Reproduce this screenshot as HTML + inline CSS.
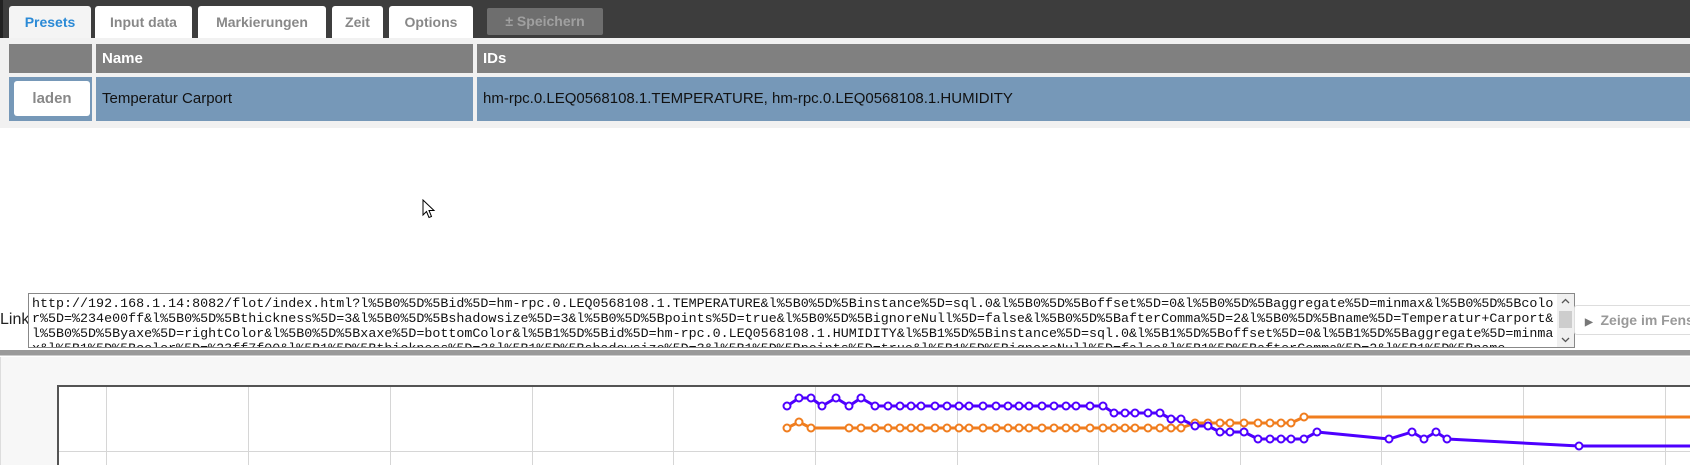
<!DOCTYPE html>
<html><head><meta charset="utf-8"><style>
*{margin:0;padding:0;box-sizing:border-box}
body{width:1690px;height:465px;overflow:hidden;background:#fff;font-family:"Liberation Sans",Arial,sans-serif;position:relative}
.a{position:absolute}
.top{left:0;top:0;width:1690px;height:38px;background:#3d3d3d;border-left:3px solid #222}
.tab{top:6px;height:35px;background:#fff;color:#888;font-weight:bold;font-size:14px;text-align:center;line-height:33px;border-radius:3px 3px 0 0}
.panel{left:0;top:38px;width:1690px;height:90px;background:#f1f1f1}
.hd{top:44px;height:29px;background:#808080;color:#fff;font-weight:bold;font-size:15px;line-height:29px;padding-left:6px}
.rw{top:77px;height:44px;background:#7698b8;color:#111;font-size:15px;line-height:44px;padding-left:6px}
pre{font-family:"Liberation Mono","Courier New",monospace;font-size:13.35px;line-height:15px;color:#111}
</style></head><body>
<div class="a top"></div>
<div class="a tab" style="left:9px;width:82px;background:#f4f4f4;color:#2b8ad6">Presets</div>
<div class="a tab" style="left:95px;width:97px">Input data</div>
<div class="a tab" style="left:198px;width:128px">Markierungen</div>
<div class="a tab" style="left:332px;width:51px">Zeit</div>
<div class="a tab" style="left:389px;width:84px">Options</div>
<div class="a" style="left:487px;top:8px;width:116px;height:27px;background:#6e6e6e;border-radius:2px;color:#a0a0a0;font-weight:bold;font-size:14px;line-height:27px;text-align:center">± Speichern</div>
<div class="a panel"></div>
<div class="a hd" style="left:9px;width:83px"></div>
<div class="a hd" style="left:96px;width:377px">Name</div>
<div class="a hd" style="left:477px;width:1213px">IDs</div>
<div class="a rw" style="left:9px;width:83px"></div>
<div class="a" style="left:14px;top:81px;width:76px;height:35px;background:#fff;border-radius:3px;color:#888;font-weight:bold;font-size:15px;line-height:35px;text-align:center">laden</div>
<div class="a rw" style="left:96px;width:377px">Temperatur Carport</div>
<div class="a rw" style="left:477px;width:1213px">hm-rpc.0.LEQ0568108.1.TEMPERATURE, hm-rpc.0.LEQ0568108.1.HUMIDITY</div>
<svg class="a" style="left:422px;top:199px" width="14" height="22" viewBox="0 0 14 22"><path d="M1 1 L1 16 L4.5 12.5 L7 18.5 L9.5 17.5 L7 11.5 L12 11.5 Z" fill="#fff" stroke="#000" stroke-width="1"/></svg>
<div class="a" style="left:0;top:311px;font-size:16px;color:#222">Link</div>
<div class="a" style="left:28px;top:293px;width:1547px;height:55px;border:1px solid #888;background:#fff;overflow:hidden;padding:3px 0 0 3px">
<pre>http://192.168.1.14:8082/flot/index.html?l%5B0%5D%5Bid%5D=hm-rpc.0.LEQ0568108.1.TEMPERATURE&amp;l%5B0%5D%5Binstance%5D=sql.0&amp;l%5B0%5D%5Boffset%5D=0&amp;l%5B0%5D%5Baggregate%5D=minmax&amp;l%5B0%5D%5Bcolo
r%5D=%234e00ff&amp;l%5B0%5D%5Bthickness%5D=3&amp;l%5B0%5D%5Bshadowsize%5D=3&amp;l%5B0%5D%5Bpoints%5D=true&amp;l%5B0%5D%5BignoreNull%5D=false&amp;l%5B0%5D%5BafterComma%5D=2&amp;l%5B0%5D%5Bname%5D=Temperatur+Carport&amp;
l%5B0%5D%5Byaxe%5D=rightColor&amp;l%5B0%5D%5Bxaxe%5D=bottomColor&amp;l%5B1%5D%5Bid%5D=hm-rpc.0.LEQ0568108.1.HUMIDITY&amp;l%5B1%5D%5Binstance%5D=sql.0&amp;l%5B1%5D%5Boffset%5D=0&amp;l%5B1%5D%5Baggregate%5D=minma
x&amp;l%5B1%5D%5Bcolor%5D=%23ff7f00&amp;l%5B1%5D%5Bthickness%5D=3&amp;l%5B1%5D%5Bshadowsize%5D=3&amp;l%5B1%5D%5Bpoints%5D=true&amp;l%5B1%5D%5BignoreNull%5D=false&amp;l%5B1%5D%5BafterComma%5D=2&amp;l%5B1%5D%5Bname</pre>
<div class="a" style="right:0;top:0;width:17px;height:53px;background:#f0f0f0"><div class="a" style="left:2px;top:17px;width:13px;height:17px;background:#cdcdcd"></div><svg class="a" style="left:3px;top:3px" width="11" height="8"><path d="M2 6 L5.5 2.5 L9 6" fill="none" stroke="#555" stroke-width="1.3"/></svg><svg class="a" style="left:3px;top:42px" width="11" height="8"><path d="M2 2 L5.5 5.5 L9 2" fill="none" stroke="#555" stroke-width="1.3"/></svg></div>
</div>
<div class="a" style="left:1574px;top:305px;width:130px;height:30px;border:1px solid #ddd;border-radius:3px;background:#fff;color:#999;font-weight:bold;font-size:14px;line-height:28px;padding-left:10px;white-space:nowrap"><span style="font-size:10px;color:#777">▶</span>&nbsp; Zeige im Fenster</div>
<div class="a" style="left:0;top:350px;width:1690px;height:6px;background:#9a9a9a;border-bottom:1px solid #ccc"></div>
<div class="a" style="left:0;top:357px;width:1690px;height:108px;background:#f7f7f7;border-left:1px solid #ddd"></div>
<svg class="a" style="left:0;top:0" width="1690" height="465">
<rect x="57" y="385" width="1640" height="90" fill="#fff"/>
<g stroke="#d6d6d6" stroke-width="1">
<line x1="57" y1="451.5" x2="1690" y2="451.5"/>
<line x1="106.5" y1="385" x2="106.5" y2="465"/><line x1="248.5" y1="385" x2="248.5" y2="465"/><line x1="390.5" y1="385" x2="390.5" y2="465"/><line x1="532.5" y1="385" x2="532.5" y2="465"/><line x1="673.5" y1="385" x2="673.5" y2="465"/><line x1="815.5" y1="385" x2="815.5" y2="465"/><line x1="957.5" y1="385" x2="957.5" y2="465"/><line x1="1098.5" y1="385" x2="1098.5" y2="465"/><line x1="1240.5" y1="385" x2="1240.5" y2="465"/><line x1="1381.5" y1="385" x2="1381.5" y2="465"/><line x1="1523.5" y1="385" x2="1523.5" y2="465"/><line x1="1665.5" y1="385" x2="1665.5" y2="465"/>
</g>
<path d="M58 465 V386 H1690" fill="none" stroke="#545454" stroke-width="2"/>
<g fill="none" stroke-width="3" stroke-linejoin="round">
<polyline stroke="#f07d1e" points="787,428 799,422 811,428 849,428 861,428 875,428 888,428 900,428 911,428 921,428 935,428 947,428 959,428 969,428 983,428 996,428 1008,428 1019,428 1029,428 1042,428 1054,428 1066,428 1076,428 1090,428 1103,428 1114,428 1125,428 1135,428 1148,428 1160,428 1171,428 1181,428 1195,423 1208,423 1220,423 1230,423 1244,423 1258,423 1270,423 1281,423 1291,423 1304,417 1690,417"/>
<polyline stroke="#4e00ff" points="787,406 799,398 811,398 822,406 836,398 849,406 861,398 875,406 888,406 900,406 911,406 921,406 935,406 947,406 959,406 969,406 983,406 996,406 1008,406 1019,406 1029,406 1042,406 1054,406 1066,406 1076,406 1090,406 1103,406 1114,413 1125,413 1135,413 1148,413 1160,413 1171,419 1181,419 1195,426 1208,426 1220,432 1230,432 1244,432 1258,439 1270,439 1281,439 1291,439 1304,439 1317,432 1389,439 1412,432 1424,439 1436,432 1447,439 1579,446 1690,446"/>
</g>
<g fill="#fff" stroke="#f07d1e" stroke-width="2">
<circle cx="787" cy="428" r="3.5"/><circle cx="799" cy="422" r="3.5"/><circle cx="811" cy="428" r="3.5"/><circle cx="849" cy="428" r="3.5"/><circle cx="861" cy="428" r="3.5"/><circle cx="875" cy="428" r="3.5"/><circle cx="888" cy="428" r="3.5"/><circle cx="900" cy="428" r="3.5"/><circle cx="911" cy="428" r="3.5"/><circle cx="921" cy="428" r="3.5"/><circle cx="935" cy="428" r="3.5"/><circle cx="947" cy="428" r="3.5"/><circle cx="959" cy="428" r="3.5"/><circle cx="969" cy="428" r="3.5"/><circle cx="983" cy="428" r="3.5"/><circle cx="996" cy="428" r="3.5"/><circle cx="1008" cy="428" r="3.5"/><circle cx="1019" cy="428" r="3.5"/><circle cx="1029" cy="428" r="3.5"/><circle cx="1042" cy="428" r="3.5"/><circle cx="1054" cy="428" r="3.5"/><circle cx="1066" cy="428" r="3.5"/><circle cx="1076" cy="428" r="3.5"/><circle cx="1090" cy="428" r="3.5"/><circle cx="1103" cy="428" r="3.5"/><circle cx="1114" cy="428" r="3.5"/><circle cx="1125" cy="428" r="3.5"/><circle cx="1135" cy="428" r="3.5"/><circle cx="1148" cy="428" r="3.5"/><circle cx="1160" cy="428" r="3.5"/><circle cx="1171" cy="428" r="3.5"/><circle cx="1181" cy="428" r="3.5"/><circle cx="1195" cy="423" r="3.5"/><circle cx="1208" cy="423" r="3.5"/><circle cx="1220" cy="423" r="3.5"/><circle cx="1230" cy="423" r="3.5"/><circle cx="1244" cy="423" r="3.5"/><circle cx="1258" cy="423" r="3.5"/><circle cx="1270" cy="423" r="3.5"/><circle cx="1281" cy="423" r="3.5"/><circle cx="1291" cy="423" r="3.5"/><circle cx="1304" cy="417" r="3.5"/>
</g>
<g fill="#fff" stroke="#4e00ff" stroke-width="2">
<circle cx="787" cy="406" r="3.5"/><circle cx="799" cy="398" r="3.5"/><circle cx="811" cy="398" r="3.5"/><circle cx="822" cy="406" r="3.5"/><circle cx="836" cy="398" r="3.5"/><circle cx="849" cy="406" r="3.5"/><circle cx="861" cy="398" r="3.5"/><circle cx="875" cy="406" r="3.5"/><circle cx="888" cy="406" r="3.5"/><circle cx="900" cy="406" r="3.5"/><circle cx="911" cy="406" r="3.5"/><circle cx="921" cy="406" r="3.5"/><circle cx="935" cy="406" r="3.5"/><circle cx="947" cy="406" r="3.5"/><circle cx="959" cy="406" r="3.5"/><circle cx="969" cy="406" r="3.5"/><circle cx="983" cy="406" r="3.5"/><circle cx="996" cy="406" r="3.5"/><circle cx="1008" cy="406" r="3.5"/><circle cx="1019" cy="406" r="3.5"/><circle cx="1029" cy="406" r="3.5"/><circle cx="1042" cy="406" r="3.5"/><circle cx="1054" cy="406" r="3.5"/><circle cx="1066" cy="406" r="3.5"/><circle cx="1076" cy="406" r="3.5"/><circle cx="1090" cy="406" r="3.5"/><circle cx="1103" cy="406" r="3.5"/><circle cx="1114" cy="413" r="3.5"/><circle cx="1125" cy="413" r="3.5"/><circle cx="1135" cy="413" r="3.5"/><circle cx="1148" cy="413" r="3.5"/><circle cx="1160" cy="413" r="3.5"/><circle cx="1171" cy="419" r="3.5"/><circle cx="1181" cy="419" r="3.5"/><circle cx="1195" cy="426" r="3.5"/><circle cx="1208" cy="426" r="3.5"/><circle cx="1220" cy="432" r="3.5"/><circle cx="1230" cy="432" r="3.5"/><circle cx="1244" cy="432" r="3.5"/><circle cx="1258" cy="439" r="3.5"/><circle cx="1270" cy="439" r="3.5"/><circle cx="1281" cy="439" r="3.5"/><circle cx="1291" cy="439" r="3.5"/><circle cx="1304" cy="439" r="3.5"/><circle cx="1317" cy="432" r="3.5"/><circle cx="1389" cy="439" r="3.5"/><circle cx="1412" cy="432" r="3.5"/><circle cx="1424" cy="439" r="3.5"/><circle cx="1436" cy="432" r="3.5"/><circle cx="1447" cy="439" r="3.5"/><circle cx="1579" cy="446" r="3.5"/>
</g>
</svg>
</body></html>
